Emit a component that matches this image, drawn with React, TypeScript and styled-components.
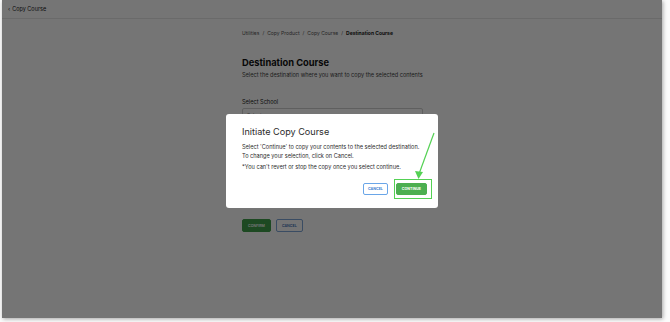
import React from "react";
import styled, { createGlobalStyle } from "styled-components";

const GlobalStyle = createGlobalStyle`
  html, body {
    margin: 0;
    padding: 0;
    background: #ffffff;
    font-family: "Inter", "Liberation Sans", sans-serif;
  }
`;

const Frame = styled.div`
  width: 670px;
  height: 322px;
  background: #fbfbfb;
  overflow: hidden;
`;

const Screen = styled.div`
  position: relative;
  margin-left: 2px;
  width: 660px;
  height: 318px;
  background: #ffffff;
  box-shadow: 1px 1px 4px rgba(0, 0, 0, 0.35);
  overflow: hidden;
`;

const TopBar = styled.header`
  height: 19px;
  display: flex;
  align-items: center;
  padding-left: 6px;
  gap: 2px;
  font-size: 5.5px;
  color: #222;
  border-bottom: 1px solid #e6e6e6;
  box-sizing: border-box;
`;

const Content = styled.main`
  margin-left: 240px;
  width: 181px;
  display: flex;
  flex-direction: column;
`;

const Crumbs = styled.nav`
  margin-top: 10px;
  height: 8px;
  display: flex;
  align-items: center;
  gap: 3px;
  font-size: 5px;
  color: #555;
`;

const Crumb = styled.span<{ $current?: boolean }>`
  font-weight: ${(p) => (p.$current ? 700 : 400)};
  color: ${(p) => (p.$current ? "#1a1a1a" : "#555")};
`;

const Title = styled.h1`
  margin: 20px 0 0;
  font-size: 9.3px;
  line-height: 12px;
  font-weight: 700;
  color: #111;
`;

const Subtitle = styled.p`
  margin: 2px 0 0;
  font-size: 5.6px;
  line-height: 8px;
  color: #444;
`;

const Field = styled.div`
  margin-top: 19px;
  display: flex;
  flex-direction: column;
  gap: 2px;
`;

const Label = styled.label`
  font-size: 5.6px;
  line-height: 8px;
  color: #222;
`;

const SelectBox = styled.div`
  height: 12px;
  border: 1px solid #cfcfcf;
  border-radius: 2px;
  display: flex;
  align-items: center;
  padding: 0 4px;
  font-size: 5px;
  color: #888;
`;

const Actions = styled.div`
  margin-top: 97px;
  display: flex;
  gap: 5px;
`;

const PageButton = styled.button<{ $primary?: boolean }>`
  height: 13px;
  padding: 0 5px;
  font-family: inherit;
  font-size: 3.6px;
  font-weight: 600;
  border-radius: 2px;
  border: 1px solid ${(p) => (p.$primary ? "#3f9f4a" : "#7ea6d8")};
  background: ${(p) => (p.$primary ? "#3f9f4a" : "#ffffff")};
  color: ${(p) => (p.$primary ? "#ffffff" : "#3c6fb5")};
`;

const Overlay = styled.div`
  position: absolute;
  inset: 0;
  background: rgba(0, 0, 0, 0.54);
  display: flex;
  align-items: flex-start;
  justify-content: center;
  padding-top: 114px;
  box-sizing: border-box;
`;

const Modal = styled.div`
  position: relative;
  width: 212px;
  height: 94px;
  background: #ffffff;
  border-radius: 3px;
  padding: 12px 11px 0 16px;
  box-sizing: border-box;
  display: flex;
  flex-direction: column;
`;

const ModalTitle = styled.h2`
  margin: 0;
  font-size: 9.1px;
  line-height: 12px;
  font-weight: 400;
  color: #2b2b2b;
`;

const ModalText = styled.p<{ $gap?: number }>`
  margin: ${(p) => p.$gap ?? 0}px 0 0;
  font-size: 5.6px;
  line-height: 9px;
  color: #2b2b2b;
  white-space: nowrap;
`;

const ModalActions = styled.div`
  margin-top: 11px;
  display: flex;
  justify-content: flex-end;
  gap: 8px;
`;

const ModalButton = styled.button<{ $primary?: boolean }>`
  height: 12px;
  padding: 0 ${(p) => (p.$primary ? 5 : 4)}px;
  font-family: inherit;
  font-size: 3.6px;
  font-weight: 700;
  border-radius: 2px;
  border: 1px solid ${(p) => (p.$primary ? "#4caf50" : "#6aa6e8")};
  background: ${(p) => (p.$primary ? "#4caf50" : "#ffffff")};
  color: ${(p) => (p.$primary ? "#ffffff" : "#3d7fd0")};
`;

const Highlight = styled.div`
  position: absolute;
  left: 168px;
  top: 65px;
  width: 38px;
  height: 20px;
  border: 1.5px solid #54d154;
  box-sizing: border-box;
`;

const Arrow = styled.svg`
  position: absolute;
  left: 186px;
  top: 16px;
  width: 30px;
  height: 52px;
`;

export default function App() {
  return (
    <>
      <GlobalStyle />
      <Frame>
        <Screen>
          <TopBar>
            <span>‹</span>
            <span>Copy Course</span>
          </TopBar>
          <Content>
            <Crumbs>
              <Crumb>Utilities</Crumb>
              <Crumb>/</Crumb>
              <Crumb>Copy Product</Crumb>
              <Crumb>/</Crumb>
              <Crumb>Copy Course</Crumb>
              <Crumb>/</Crumb>
              <Crumb $current>Destination Course</Crumb>
            </Crumbs>
            <Title>Destination Course</Title>
            <Subtitle>Select the destination where you want to copy the selected contents</Subtitle>
            <Field>
              <Label>Select School</Label>
              <SelectBox>Select</SelectBox>
            </Field>
            <Actions>
              <PageButton $primary>CONFIRM</PageButton>
              <PageButton>CANCEL</PageButton>
            </Actions>
          </Content>
          <Overlay>
            <Modal>
              <ModalTitle>Initiate Copy Course</ModalTitle>
              <ModalText $gap={5}>Select 'Continue' to copy your contents to the selected destination.</ModalText>
              <ModalText>To change your selection, click on Cancel.</ModalText>
              <ModalText $gap={2}>*You can't revert or stop the copy once you select continue.</ModalText>
              <ModalActions>
                <ModalButton>CANCEL</ModalButton>
                <ModalButton $primary>CONTINUE</ModalButton>
              </ModalActions>
              <Highlight />
              <Arrow viewBox="0 0 30 52">
                <line x1="22" y1="3" x2="7" y2="44" stroke="#54d154" strokeWidth="1.2" />
                <path d="M3 41 L6.5 49 L11 42 Z" fill="#54d154" />
              </Arrow>
            </Modal>
          </Overlay>
        </Screen>
      </Frame>
    </>
  );
}
